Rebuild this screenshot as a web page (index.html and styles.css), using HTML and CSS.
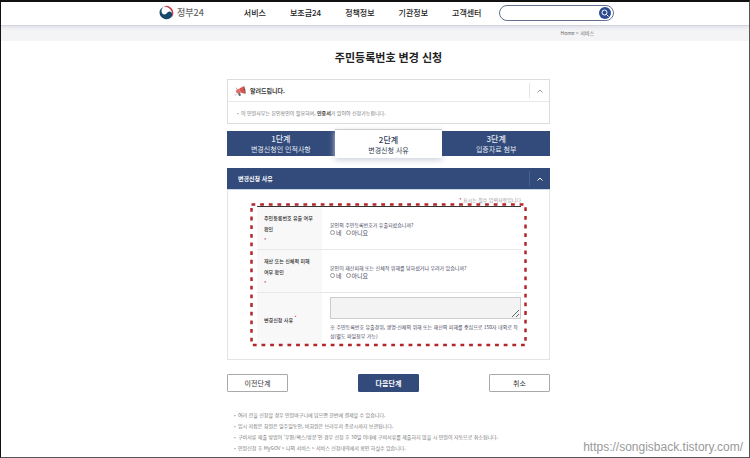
FILE: index.html
```html
<!DOCTYPE html>
<html lang="ko">
<head>
    <meta charset="UTF-8">
    <meta name="viewport" content="width=device-width, initial-scale=1.0">
    <title>주민등록번호 변경 신청 | 정부24</title>
    <link rel="stylesheet" href="styles.css">
</head>
<body>

<header class="header">
    <div class="header-inner">
        <a href="#" class="logo">
            <svg width="15" height="15" viewBox="0 0 30 30" aria-hidden="true">
                <path d="M9 3 A14 14 0 0 1 28 20 Q27 23 25 25 Q28 17 24 11 Q19 3 9 3Z" fill="#c93f55"/>
                <path d="M9 4 C4 6 1 10 1 15 A14 14 0 0 0 25 24 C28 19 26 13 21 13 C16 13 16 19 11 19 C5 19 2 10 9 4Z" fill="#17456b"/>
            </svg>
            <span>정부24</span>
        </a>
        <nav class="nav">
            <a href="#">서비스</a>
            <a href="#">보조금24</a>
            <a href="#">정책정보</a>
            <a href="#">기관정보</a>
            <a href="#">고객센터</a>
        </nav>
        <form class="search">
            <input type="text" aria-label="검색어">
            <button type="button" aria-label="검색">
                <svg width="12" height="12" viewBox="0 0 24 24" aria-hidden="true">
                    <circle cx="11" cy="11" r="5" fill="none" stroke="#fff" stroke-width="2"/>
                    <path d="M15 15 L19 19" stroke="#fff" stroke-width="2"/>
                </svg>
            </button>
        </form>
    </div>
</header>

<div class="breadcrumb">
    <div class="breadcrumb-inner"><a href="#">Home</a> &gt; <a href="#">서비스</a></div>
</div>

<main class="container">
    <h1>주민등록번호 변경 신청</h1>

    <section class="notice">
        <div class="notice-head">
            <svg width="12" height="12" viewBox="0 0 24 24" aria-hidden="true">
                <path d="M3 9 L9 7 L11 15 L5 17 Q2 16 2 13 Z" fill="#e36d67"/>
                <path d="M9 7 L18 2 L21 18 L11 15 Z" fill="#d9534f"/>
                <path d="M18 2 Q22 9 21 18 Q17 10 18 2Z" fill="#555"/>
                <path d="M6 17 L10 15 L12 21 L8 22Z" fill="#666"/>
                <path d="M2 6 L4 7 M1 20 L3 19" stroke="#999" stroke-width="2"/>
            </svg>
            <h2>알려드립니다.</h2>
            <button type="button" class="toggle" aria-label="접기">
                <svg width="6" height="4" viewBox="0 0 6 4" aria-hidden="true"><path d="M.5 3.5 L3 1 L5.5 3.5" fill="none" stroke="currentColor"/></svg>
            </button>
        </div>
        <ul class="notice-body">
            <li>이 민원사무는 본인확인이 필요하며, <strong>인증서</strong>가 있어야 신청가능합니다.</li>
        </ul>
    </section>

    <ol class="steps">
        <li><strong>1단계</strong>변경신청인 인적사항</li>
        <li class="active"><strong>2단계</strong>변경신청 사유</li>
        <li><strong>3단계</strong>입증자료 첨부</li>
    </ol>

    <form>
        <section class="panel">
            <div class="panel-head">
                <h2>변경신청 사유</h2>
                <button type="button" class="toggle" aria-label="접기">
                    <svg width="6" height="4" viewBox="0 0 6 4" aria-hidden="true"><path d="M.5 3.5 L3 1 L5.5 3.5" fill="none" stroke="currentColor"/></svg>
                </button>
            </div>
            <div class="panel-body">
                <p class="required-note"><span class="star">*</span> 표시는 필수 입력사항입니다</p>
                <div class="table-wrap">
                    <table>
                        <tr>
                            <th scope="row">주민등록번호 유출 여부<br>확인<br><span class="star">*</span></th>
                            <td>
                                <p>본인의 주민등록번호가 유출되셨습니까?</p>
                                <div class="radios">
                                    <label><input type="radio" name="leak">네</label>
                                    <label><input type="radio" name="leak">아니요</label>
                                </div>
                            </td>
                        </tr>
                        <tr>
                            <th scope="row">재산 또는 신체적 피해<br>여부 확인<br><span class="star">*</span></th>
                            <td>
                                <p>본인이 재산피해 또는 신체적 위해를 당하셨거나 우려가 있습니까?</p>
                                <div class="radios">
                                    <label><input type="radio" name="damage">네</label>
                                    <label><input type="radio" name="damage">아니요</label>
                                </div>
                            </td>
                        </tr>
                        <tr class="reason">
                            <th scope="row"><label for="reason">변경신청 사유</label> <sup class="star">*</sup></th>
                            <td>
                                <textarea id="reason"></textarea>
                                <p>※ 주민등록번호 유출경위, 생명·신체의 위해 또는 재산의 피해를 중심으로 150자 내외로 작성(별도 파일첨부 가능)</p>
                            </td>
                        </tr>
                    </table>
                    <svg class="highlight" aria-hidden="true"><rect x="1.5" y="1.5" width="100%" height="100%"/></svg>
                </div>
            </div>
        </section>

        <div class="buttons">
            <button type="button">이전단계</button>
            <button type="submit" class="primary">다음단계</button>
            <button type="button">취소</button>
        </div>
    </form>

    <ul class="guide">
        <li>여러 건을 신청할 경우 민원바구니에 담으면 한번에 결제할 수 있습니다.</li>
        <li>임시 저장은 회원은 일주일동안, 비회원은 브라우저 종료시까지 보관됩니다.</li>
        <li>구비서류 제출 방법이 '우편/팩스/방문'인 경우 신청 후 30일 이내에 구비서류를 제출하지 않을 시 민원이 자동으로 취소됩니다.</li>
        <li>민원신청 후 MyGOV &gt; 나의 서비스 &gt; 서비스 신청내역에서 확인 하실수 있습니다.</li>
    </ul>
</main>

<a href="https://songisback.tistory.com/" class="watermark">https://songisback.tistory.com/</a>

</body>
</html>
```
FILE: styles.css
```css
* {
    box-sizing: border-box;
}
body {
    position: relative;
    min-height: 100vh;
    margin: 0;
    border: 1px solid #555;
    border-top: 2px solid #111;
    border-left-color: #111;
    background-color: #fff;
    font-family: "Noto Sans CJK KR", sans-serif;
    font-size: 5px;
    line-height: 9px;
    color: #444;
}
a {
    color: inherit;
    text-decoration: none;
}
h1, h2, p, ul, ol {
    margin: 0;
    padding: 0;
}
ul, ol {
    list-style: none;
}
button, input, textarea {
    font-family: inherit;
    margin: 0;
    padding: 0;
}

/* header */
.header {
    position: relative;
    height: 24px;
    padding-left: 23px;
    border-bottom: 1px solid #d3d4dd;
    box-shadow: 0 1px 4px #d9dbe8;
}
.header-inner {
    display: flex;
    align-items: center;
    width: 100%;
    max-width: 455px;
    height: 21px;
    margin: 0 auto;
}
.logo {
    display: flex;
    align-items: center;
    gap: 3px;
    font-size: 9px;
    font-weight: 500;
    color: #666;
}
.nav {
    display: flex;
    gap: 24px;
    margin-left: 40px;
    font-size: 8px;
    font-weight: 500;
    color: #222;
}
.search {
    display: flex;
    align-items: center;
    width: 115px;
    height: 16px;
    margin-left: auto;
    padding: 0 2px 0 8px;
    border: 1px solid #65718f;
    border-radius: 8px;
}
.search input {
    flex: 1;
    min-width: 0;
    height: 12px;
    border: 0;
    outline: 0;
    font-size: 8px;
}
.search button {
    display: flex;
    width: 12px;
    height: 12px;
    border: 0;
    border-radius: 50%;
    background-color: #2c4a92;
}
.breadcrumb {
    height: 15px;
    padding-left: 23px;
    background-color: #f4f3f5;
    line-height: 13px;
    color: #666;
}
.breadcrumb-inner {
    max-width: 455px;
    margin: 0 auto;
    padding-right: 20px;
    text-align: right;
}

.container {
    box-sizing: content-box;
    max-width: 323px;
    margin: 0 auto;
    padding-left: 27px;
}
h1 {
    padding: 8px 0 13px;
    font-size: 11px;
    line-height: 17px;
    text-align: center;
    color: #222;
}
h2 {
    font-size: 6px;
}

/* notice box */
.notice {
    border: 1px solid #ddd;
}
.notice-head {
    display: flex;
    align-items: center;
    gap: 3px;
    height: 22px;
    padding-left: 7px;
    border-bottom: 1px solid #e8e8e8;
    color: #333;
}
.toggle {
    display: flex;
    align-items: center;
    justify-content: center;
    width: 20px;
    height: 15px;
    margin-left: auto;
    border: 0;
    border-left: 1px solid #e5e5e5;
    background: none;
    color: #999;
}
.notice-body {
    padding: 6px 9px;
    color: #777;
}
.notice-body strong {
    color: #333;
}
.notice-body li::before, .guide li::before {
    content: "•";
    display: inline-block;
    width: 4px;
    color: #999;
}

/* steps */
.steps {
    display: flex;
    align-items: center;
    margin: 5px 0 10px;
}
.steps li {
    flex: 1;
    padding: 2px 0 3px;
    background-color: #324b7a;
    font-size: 7px;
    line-height: 8px;
    text-align: center;
    color: #e4e9f3;
}
.steps strong {
    display: block;
    font-size: 8px;
    font-weight: 500;
    line-height: 12px;
}
.steps .active {
    padding: 4px 0;
    border-top: 1px solid #ccc;
    background-color: #fff;
    box-shadow: 0 2px 6px #ccd0dc;
    color: #333c55;
}

/* form panel */
.panel {
    border: 1px solid #e2e4e8;
    border-top: 0;
}
.panel-head {
    display: flex;
    align-items: center;
    height: 22px;
    margin: 0 -1px;
    padding: 0 1px 0 11px;
    border-bottom: 1px solid #c9d5e8;
    background-color: #324b7a;
    background-clip: padding-box;
    color: #fff;
}
.panel-head .toggle {
    border-color: #4a6291;
    color: #fff;
}
.panel-body {
    padding: 5px 28px 14px 29px;
}
.required-note {
    margin-bottom: 2px;
    text-align: right;
    color: #999;
}
.star {
    color: #b3262a;
}
.table-wrap {
    position: relative;
}
table {
    width: 100%;
    table-layout: fixed;
    border-collapse: collapse;
    border-top: 1px solid #333;
}
th, td {
    height: 43px;
    padding: 0;
    border-bottom: 1px solid #e8e8e8;
    text-align: left;
}
th {
    width: 65px;
    padding-left: 7px;
    background-color: #f8f8f8;
    font-weight: 500;
    line-height: 11px;
    color: #333;
}
td {
    padding-left: 8px;
    color: #3f455c;
}
.reason th, .reason td {
    height: 52px;
    border-bottom: 0;
}
.radios {
    display: flex;
    gap: 4px;
    font-size: 6px;
    line-height: 8px;
}
.radios label {
    display: flex;
    align-items: center;
    gap: 1px;
}
.radios input {
    appearance: none;
    width: 5px;
    height: 5px;
    border: 1px solid #999;
    border-radius: 50%;
}
.radios input:checked {
    background-color: #324b7a;
}
textarea {
    display: block;
    width: 100%;
    height: 22px;
    margin-bottom: 3px;
    border: 1px solid #ccc;
    background-color: #f3f3f3;
    font-size: 6px;
}
/* dashed frame round the required fields */
.highlight {
    position: absolute;
    top: -3px;
    left: -7px;
    width: calc(100% + 13px);
    height: calc(100% + 5px);
    pointer-events: none;
}
.highlight rect {
    width: calc(100% - 3px);
    height: calc(100% - 3px);
    fill: none;
    stroke: #b3262a;
    stroke-width: 2.5px;
    stroke-dasharray: 3.8 4.85;
}

.buttons {
    display: flex;
    justify-content: space-between;
    margin: 14px 0 17px;
}
.buttons button {
    width: 61px;
    height: 18px;
    border: 1px solid #aaa;
    border-radius: 1px;
    background-color: #fff;
    font-size: 7px;
    line-height: 14px;
    color: #333;
}
.buttons .primary {
    border-color: #324b7a;
    background-color: #324b7a;
    font-weight: 700;
    color: #fff;
}

.guide {
    padding-left: 7px;
    line-height: 11px;
    color: #777;
}
.watermark {
    position: absolute;
    right: 6px;
    bottom: 3px;
    font-family: "Liberation Sans", Arial, sans-serif;
    font-size: 12px;
    line-height: 14px;
    color: #999;
}
```
